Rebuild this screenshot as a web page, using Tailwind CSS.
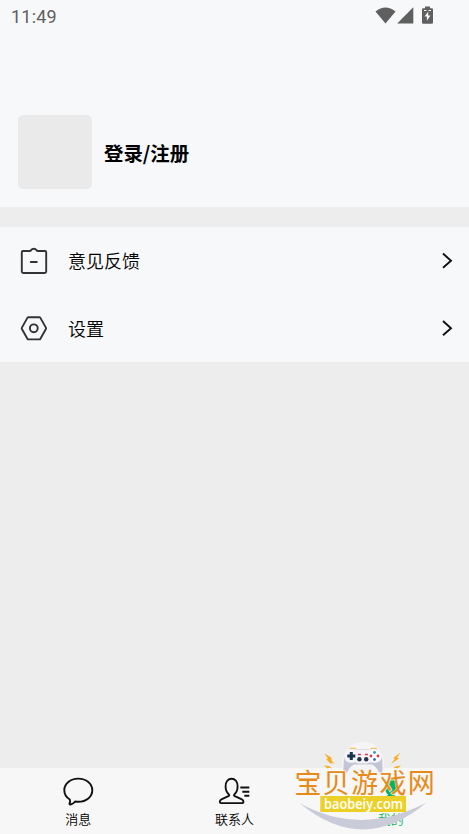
<!DOCTYPE html>
<html lang="zh-CN">
<head>
  <meta charset="UTF-8" />
  <meta name="viewport" content="width=device-width, initial-scale=1.0" />
  <title>我的</title>
  <script src="https://cdn.jsdelivr.net/npm/@tailwindcss/browser@4"></script>
</head>

<body class="bg-[#ededed] text-black font-['Noto_Sans_CJK_SC',sans-serif]">
  <div class="relative flex flex-col h-[834px] overflow-hidden">
    <!-- Header -->
    <header class="h-[207px] bg-[#f7f8fa]">
      <div class="flex justify-between h-8 pl-[11px] pr-[35px] text-[#5f5f5f]">
        <span class="font-[Roboto,sans-serif] text-[18px] leading-[33px] tracking-[0.2px]">11:49</span>
        <svg class="w-[59px] h-8" viewBox="375 0 59 32" fill="currentColor">
          <path d="M375.500 11.500Q385.500 3.500 395.500 11.500L385.500 23.500Z" />
          <path d="M413.300 7.200V23.400H397.200Z" />
          <path d="M425 6.500h5v1.700h1.800q1.200 0 1.200 1.200v13.200q0 1.200-1.200 1.200h-8.600q-1.200 0-1.200-1.200V9.400q0-1.200 1.200-1.200h1.800z" />
          <path d="M424 10.500h2.500M428.500 10.500h2.500" stroke="#f7f8fa" />
          <path d="M428.200 11.500l-3.600 5h2.300v4.300l3.600-5.400h-2.300z" fill="#f7f8fa" />
        </svg>
      </div>
      <div class="flex items-center pt-[83px] pl-[18px]">
        <div class="size-[74px] rounded-[5px] bg-[#eaeaea]"></div>
        <h1 class="ml-3 pt-0.5 text-[19.400px] leading-7 font-bold">登录/注册</h1>
      </div>
    </header>

    <!-- Menu -->
    <ul class="mt-5 h-[135px] bg-[#f7f8fa]">
      <li class="flex items-center h-[67px] pl-5 pr-4">
        <svg class="w-7 h-8" viewBox="20 245 28 32" fill="none" stroke="#333" stroke-width="1.900" stroke-linejoin="round" stroke-linecap="round">
          <path d="M23 251h6.500q1.200 0 1.700-1 .8-1.300 2.600-1.300t2.600 1.300q.5 1 1.700 1H45q1.200 0 1.200 1.200V271.500q0 1.500-1.500 1.500H23.300q-1.500 0-1.500-1.500V252.200q0-1.200 1.200-1.200zM30.800 262h6" />
        </svg>
        <span class="flex-1 ml-5 pb-0.5 text-[18px] leading-7 font-[350]">意见反馈</span>
        <svg class="w-3 h-5" viewBox="0 0 12 20" fill="none" stroke="#111" stroke-width="1.900"><path d="M2 2.500l8 7.300-8 7" /></svg>
      </li>
      <li class="flex items-center h-[68px] pl-5 pr-4">
        <svg class="w-7 h-8" viewBox="20 312 28 32" fill="none" stroke="#333" stroke-width="1.900" stroke-linejoin="round">
          <path d="M28.600 317.200h10.600q.8 0 1.200.7l5.500 9.700q.4.700 0 1.400l-5.500 9.700q-.4.700-1.200.7H28.600q-.8 0-1.200-.7L21.900 329q-.4-.7 0-1.400l5.500-9.700q.4-.7 1.200-.7z" />
          <circle cx="33.800" cy="328.300" r="3.900" />
        </svg>
        <span class="flex-1 ml-5 text-[18px] leading-7 font-[350]">设置</span>
        <svg class="w-3 h-5" viewBox="0 0 12 20" fill="none" stroke="#111" stroke-width="1.900"><path d="M2 3l8 7.300-8 7" /></svg>
      </li>
    </ul>

    <!-- Tab bar -->
    <nav class="mt-auto grid grid-cols-3 h-[66px] bg-[#f7f7f7] text-[13px] leading-[19px] font-[350]">
      <div class="flex flex-col items-center pt-2">
        <svg class="w-8 h-[33px]" viewBox="62 776 32 33" fill="none" stroke="#111" stroke-width="1.900" stroke-linejoin="round">
          <path d="M78.300 778.600c8 0 14 5.100 14 11.600s-6 11.600-14 11.600q-1.800 0-3.200-.3c-1.100 1.500-2.800 2.600-4.500 3-1 .2-1.400-.4-1-1.300.5-1 .6-2.600.2-3.700-3.300-2-5.500-5.400-5.500-9.300 0-6.500 6-11.600 14-11.600z" />
        </svg>
        <span>消息</span>
      </div>
      <div class="flex flex-col items-center pt-2">
        <svg class="w-8 h-[33px]" viewBox="218 776 32 33" fill="none" stroke="#111" stroke-width="1.900" stroke-linejoin="round">
          <path d="M228.900 794.500c-2.200-1.900-3.300-4.600-3.300-8 0-4.700 2.400-7.700 6-7.700s6 3 6 7.700c0 3.400-1.100 6.100-3.300 8-.5.700-.3 1.300.5 1.700l6.600 2.900c1.500.7 2.100 1.500 2.100 2.700 0 .9-.5 1.300-1.300 1.300H221.100c-.8 0-1.300-.4-1.300-1.300 0-1.200.6-2 2.100-2.700l6.500-2.900c.8-.4 1-1 .5-1.700z" />
          <path d="M240.300 787.500h9M242.300 791.700h7M244.300 795.800h5" />
        </svg>
        <span>联系人</span>
      </div>
      <div class="flex flex-col items-center pt-2 text-[#07b45b]">
        <svg class="w-8 h-[33px]" viewBox="375 776 32 33" fill="currentColor">
          <path d="M391 779.500c3.700 0 6.200 2.500 6.200 7.200 0 3.400-1.300 6.400-3.600 8.300l7 3.100c1.700.9 2.200 1.700 2.200 4.300H379.200c0-2.600.5-3.400 2.200-4.300l7-3.100c-2.300-1.900-3.600-4.900-3.600-8.300 0-4.700 2.500-7.200 6.200-7.200z" />
        </svg>
        <span>我的</span>
      </div>
    </nav>

    <!-- Site logo over the tab bar -->
    <svg class="absolute right-[29px] bottom-0 w-[150px] h-[94px]" viewBox="290 740 150 94">
      <circle cx="363" cy="763" r="21" fill="#f5f5f5" />
      <path d="M299.500 803Q360 837 426.500 802.500Q363 856 299.500 803Z" fill="#c9cbd8" />
      <g fill="#f6ad23">
        <path d="M324.500 753.500l7 4.300.2 3 3.300 3-3.700-1.400.2 2.200-5.500-5.600 2-.2z" />
        <path d="M324 765.500l5 .5 3.500 2.500-3.500-.7-1.500.8z" />
        <path d="M400.500 752.500l-7.500 5.800 2 .4-4 5.300 8.200-5.800-2.200-.4z" />
        <path d="M401 765.500l-5 .7-3 2 3-.5 1.500.8z" />
      </g>
      <path d="M349.500 750v-1q0-1.300 1.300-1.300h3.900q1.300 0 1.300 1.300v1zM370.500 750v-1q0-1.300 1.300-1.300h3.900q1.300 0 1.300 1.300v1z" fill="#f2bd48" />
      <path d="M350 749.500h26q5.500 1 6 7l.6 12q0 4.500-2 4.500-1.600 0-3.600-4-2-3.500-5-4.500h-18q-3 1-5 4.500-2 4-3.600 4-2 0-2-4.500l.6-12q.5-6 6-7z" fill="#c3c5d5" />
      <path d="M350 749q4-.7 7 .9h12q3-1.600 7-.9 6 1.500 6 7 0 5-5 6.500-3 .6-6-.3l-4 1.300h-8l-4-1.300q-3 .9-6 .3-5-1.500-5-6.500 0-5.500 6-7z" fill="#f4f4f8" />
      <path d="M351.300 752v8M347.300 756h8" stroke="#17344f" stroke-width="3" />
      <g fill="#27324f"><circle cx="359.400" cy="759.300" r="2.200" /><circle cx="366.200" cy="759.300" r="2.200" /></g>
      <path d="M357.900 754.500h3M364.900 754.500h3" stroke="#d9365b" stroke-width="1.500" />
      <circle cx="374.500" cy="756" r="5.500" fill="#fff" />
      <circle cx="374.500" cy="752.500" r="1.400" fill="#1ea9a1" />
      <circle cx="371" cy="756" r="1.400" fill="#d63a50" />
      <circle cx="378" cy="756" r="1.400" fill="#d63a50" />
      <circle cx="374.500" cy="759.500" r="1.400" fill="#3270c0" />
      <text x="294.500" y="792.500" font-size="27" letter-spacing="1.300" font-weight="400" fill="#e68a1c" stroke="#fbf7f0" stroke-width="1.200" paint-order="stroke">宝贝游戏网</text>
      <path d="M320.300 796h85.700v16h-85.700z" fill="#ecd028" />
      <text x="324" y="808.500" class="font-['Open_Sans',sans-serif]" font-size="14" font-weight="600" textLength="79" lengthAdjust="spacingAndGlyphs" fill="#fff">baobeiy.com</text>
    </svg>
  </div>
</body>
</html>
